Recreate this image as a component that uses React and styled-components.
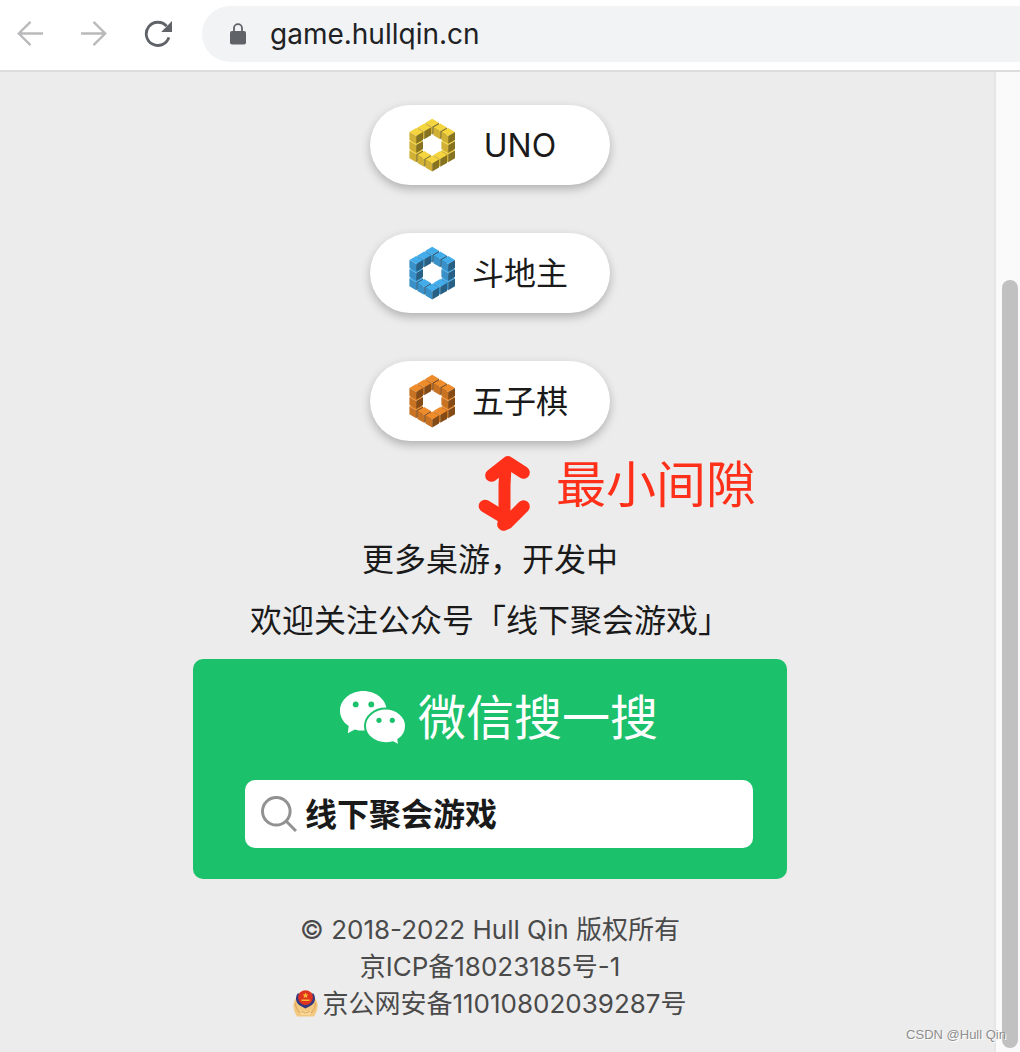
import React from "react";
import styled, { createGlobalStyle } from "styled-components";

const GlobalStyle = createGlobalStyle`
  * {
    box-sizing: border-box;
  }

  body {
    margin: 0;
    background: #ececec;
    color: #1a1a1a;
    font-family: Inter, "Noto Sans CJK SC", sans-serif;
  }

  button,
  input {
    font: inherit;
    color: inherit;
    border: 0;
    padding: 0;
    background: none;
  }

  a {
    color: inherit;
    text-decoration: none;
  }

  svg {
    display: block;
    flex-shrink: 0;
  }
`;

const Window = styled.div`
  position: relative;
  display: flex;
  flex-direction: column;
  min-height: 100vh;
  overflow: hidden;
`;

const Toolbar = styled.header`
  display: flex;
  align-items: center;
  padding: 6px 0 8px 16px;
  background: #fff;
  border-bottom: 2px solid #dcdcdc;
`;

const NavButtons = styled.nav`
  display: flex;
  gap: 36px;
  margin-right: 30px;
`;

const NavButton = styled.button`
  width: 28px;
  height: 28px;
  color: ${({ disabled }) => (disabled ? "#bababc" : "#5f6368")};
`;

const AddressBar = styled.label`
  flex: 1;
  display: flex;
  align-items: center;
  gap: 24px;
  height: 56px;
  padding-left: 28px;
  background: #f1f3f4;
  border-radius: 28px 0 0 28px;
`;

const AddressInput = styled.input`
  flex: 1;
  min-width: 0;
  font-size: 28px;
  color: #202124;
  outline: none;
`;

const Viewport = styled.div`
  flex: 1;
  display: flex;
`;

const Page = styled.main`
  flex: 1;
  display: flex;
  flex-direction: column;
  align-items: center;
  padding: 33px 14px 24px 0;
`;

const GameList = styled.ul`
  display: flex;
  flex-direction: column;
  gap: 48px;
  margin: 0;
  padding: 0;
  list-style: none;
`;

const GameLink = styled.a`
  display: flex;
  align-items: center;
  gap: 16px;
  width: 240px;
  height: 80px;
  padding: 0 42px 0 38px;
  border-radius: 40px;
  background: #fff;
  box-shadow: 0 4px 10px rgba(0, 0, 0, 0.25);
  font-size: 32px;
  line-height: 45px;
`;

const GameName = styled.span`
  flex: 1;
  text-align: center;
`;

const Gap = styled.div`
  position: relative;
  width: 100%;
  height: 96px;
`;

// Hand-drawn note lying over the free space
const Note = styled.div`
  position: absolute;
  top: 12px;
  left: calc(50% - 14px);
  display: flex;
  gap: 24px;
  color: #ff3019;
  font-size: 50px;
  line-height: 64px;
  white-space: nowrap;
`;

const Intro = styled.div`
  display: flex;
  flex-direction: column;
  gap: 16px;
  margin-bottom: 16px;
  font-size: 32px;
  line-height: 45px;
  text-align: center;

  p {
    margin: 0;
  }
`;

const WechatCard = styled.section`
  width: 594px;
  max-width: 100%;
  padding: 24px 34px 31px 52px;
  border-radius: 10px;
  background: #1cc16b;
`;

const WechatTitle = styled.h2`
  display: flex;
  align-items: center;
  justify-content: center;
  gap: 12px;
  margin: 0 0 27px;
  color: #fff;
  font-size: 48px;
  font-weight: 400;
  line-height: 70px;
`;

const SearchBox = styled.label`
  display: flex;
  align-items: center;
  gap: 8px;
  height: 68px;
  padding: 0 16px;
  border-radius: 10px;
  background: #fff;
`;

const SearchInput = styled.input`
  flex: 1;
  min-width: 0;
  height: 45px;
  font-size: 32px;
  font-weight: 700;
  line-height: 45px;
  outline: none;
`;

const Footer = styled.footer`
  display: flex;
  flex-direction: column;
  align-items: center;
  margin-top: 32px;
  color: #4a4a4a;
  font-size: 26px;
  line-height: 37px;
`;

const PoliceLink = styled.a`
  display: flex;
  align-items: center;
  gap: 4px;
`;

const Scrollbar = styled.div`
  display: flex;
  flex-direction: column;
  width: 26px;
  padding: 0 2px 4px 6px;
  border-left: 2px solid #e6e6e6;
  background: #fafafa;

  &::before {
    content: "";
    flex: 208;
  }
`;

const Thumb = styled.div`
  flex: 768;
  border-radius: 8px;
  background: #c1c1c1;
`;

const Watermark = styled.span`
  position: absolute;
  right: 14px;
  bottom: 8px;
  color: #8e8e8e;
  font-family: "Liberation Sans", sans-serif;
  font-size: 13px;
  line-height: 18px;
  text-shadow: 1px 1px 0 #fff;
`;

const BackIcon = () => (
  <svg width="28" height="28" fill="none" stroke="currentColor" strokeWidth="2.4">
    <path d="M27 13.5H2.5M14.5 1.8 2.8 13.5 14.5 25.2" />
  </svg>
);

const ForwardIcon = () => (
  <svg width="28" height="28" fill="none" stroke="currentColor" strokeWidth="2.4">
    <path d="M1 13.5H25.5M13.5 1.8 25.2 13.5 13.5 25.2" />
  </svg>
);

const ReloadIcon = () => (
  <svg width="28" height="28" fill="none">
    <path
      d="M22.6 6.2A11.6 11.6 0 1 0 24.9 17.4"
      stroke="currentColor"
      strokeWidth="2.8"
    />
    <path d="M28 1V12H17.2Z" fill="currentColor" />
  </svg>
);

const LockIcon = () => (
  <svg width="16" height="22" fill="none">
    <path d="M4 9V5.2a4 4 0 0 1 8 0V9" stroke="#5f6368" strokeWidth="1.8" />
    <rect y="8" width="16" height="13.5" rx="2" fill="#5f6368" />
  </svg>
);

// Ring of cubes along six edges of a 3x3x3 block, sorted back to front
const RING = [
  [0, 0, 2],
  [0, 1, 2],
  [0, 2, 2],
  [0, 2, 1],
  [0, 2, 0],
  [1, 2, 0],
  [2, 2, 0],
  [2, 1, 0],
  [2, 0, 0],
  [2, 0, 1],
  [2, 0, 2],
  [1, 0, 2],
].sort((a, b) => a[0] + a[1] + a[2] - (b[0] + b[1] + b[2]));

const CubeRing = ({ colors }) => {
  const [top, left, right] = colors;
  return (
    <svg width="48" height="54" aria-hidden="true">
      {RING.map(([x, y, z]) => (
        <g
          key={`${x}${y}${z}`}
          transform={`translate(${24.2 + (x - y) * 8} ${
            8.7 + (x + y) * 4.6 + (2 - z) * 9.2
          })`}
        >
          <path d="M0 -7.9 6.8 -3.9 0 0 -6.8 -3.9Z" fill={top} />
          <path d="M-6.8 -3.9 0 0V7.900L-6.8 4Z" fill={left} />
          <path d="M6.8 -3.9 0 0V7.900L6.8 4Z" fill={right} />
        </g>
      ))}
    </svg>
  );
};

const DoubleArrow = () => (
  <svg
    width="56"
    height="80"
    viewBox="476 452 56 80"
    fill="none"
    stroke="currentColor"
    strokeWidth="12.6"
    strokeLinecap="round"
    strokeLinejoin="round"
    aria-hidden="true"
  >
    <path d="M491.5 474.5 508 461.5 523.5 471.5" />
    <path d="M505.5 466 504.5 484V520" strokeWidth="12" />
    <path d="M485 505 505 517 503.5 523.5 507 522 523.5 505.5" />
  </svg>
);

const WechatIcon = () => (
  <svg width="66" height="54" fill="#fff" aria-hidden="true">
    <path d="M23.3 0C10.4 0 0 8.8 0 19.8c0 6.2 3.3 11.6 8.7 15.3L7.8 42.3 14.8 38.4c2.7.8 5.5 1.2 8.5 1.2C36.2 39.6 46.7 30.8 46.7 19.8S36.2 0 23.3 0Z" />
    <path
      d="M45.8 17.6C34.3 17.6 25 25.4 25 34.9s9.3 17.3 20.8 17.3c2.6 0 5-.4 7.2-1l6.3 3.5-1-5.9c4.7-3.2 7.7-8.2 7.7-13.9 0-9.5-9.2-17.3-20.2-17.3Z"
      stroke="#1cc16b"
      strokeWidth="2"
    />
    <g fill="#1cc16b">
      <circle cx="15.7" cy="13.4" r="2.9" />
      <circle cx="31.3" cy="13.4" r="2.9" />
      <circle cx="39" cy="29.3" r="2.6" />
      <circle cx="52.3" cy="29.3" r="2.6" />
    </g>
  </svg>
);

const SearchIcon = () => (
  <svg width="36" height="36" fill="none" stroke="#919193" strokeWidth="3">
    <circle cx="15.3" cy="15.3" r="13.8" />
    <path d="M25 25 35 35" />
  </svg>
);

const PoliceBadge = () => (
  <svg width="25" height="27" viewBox="0 0 25 27" aria-hidden="true">
    <path
      d="M2.5 9C0 12 0 17 1 19.5 1 22 3 24 4 26.5H21C22 24 24 22 24 19.5 25 17 25 12 22.5 9Z"
      fill="#f3c982"
    />
    <path
      d="M2.5 13C2.5 17 4 20 7 23M22.5 13C22.5 17 21 20 18 23"
      fill="none"
      stroke="#d89f50"
    />
    <path
      d="M4.5 3.5C3 6 2.5 9 3.5 11.5c1.3 3.5 5 5 9 7 4-2 7.7-3.5 9-7 1-2.5.5-5.5-1-8Z"
      fill="#34387f"
    />
    <circle cx="12.5" cy="7.6" r="7.4" fill="#e03420" />
    <path
      d="M12.5 2.5l.9 1.9 2 .2-1.5 1.4.5 2-1.9-1-1.9 1 .5-2-1.5-1.4 2-.2ZM8.5 9.5h8V11h-8Z"
      fill="#f8b832"
    />
    <path d="M7 20q5.5 3 11 0l-1 4.5H8Z" fill="#f8dfa3" />
    <path d="M8 21.5q4.5 3 9 0" fill="none" stroke="#dda557" />
  </svg>
);

const games = [
  { name: "UNO", colors: ["#f5d53e", "#d0b035", "#877220"] },
  { name: "斗地主", colors: ["#43adec", "#3991c8", "#276084"] },
  { name: "五子棋", colors: ["#ee8b2b", "#c87324", "#854b16"] },
];

const App = () => (
  <Window>
    <GlobalStyle />
    <Toolbar>
      <NavButtons>
        <NavButton type="button" aria-label="后退" disabled>
          <BackIcon />
        </NavButton>
        <NavButton type="button" aria-label="前进" disabled>
          <ForwardIcon />
        </NavButton>
        <NavButton type="button" aria-label="刷新">
          <ReloadIcon />
        </NavButton>
      </NavButtons>
      <AddressBar>
        <LockIcon />
        <AddressInput
          type="text"
          aria-label="网址"
          defaultValue="game.hullqin.cn"
        />
      </AddressBar>
    </Toolbar>
    <Viewport>
      <Page>
        <GameList>
          {games.map(({ name, colors }) => (
            <li key={name}>
              <GameLink href="#">
                <CubeRing colors={colors} />
                <GameName>{name}</GameName>
              </GameLink>
            </li>
          ))}
        </GameList>
        <Gap>
          <Note>
            <DoubleArrow />
            <span>最小间隙</span>
          </Note>
        </Gap>
        <Intro>
          <p>更多桌游，开发中</p>
          <p>欢迎关注公众号「线下聚会游戏」</p>
        </Intro>
        <WechatCard>
          <WechatTitle>
            <WechatIcon />
            微信搜一搜
          </WechatTitle>
          <SearchBox>
            <SearchIcon />
            <SearchInput
              type="text"
              aria-label="搜一搜"
              defaultValue="线下聚会游戏"
            />
          </SearchBox>
        </WechatCard>
        <Footer>
          <span>© 2018-2022 Hull Qin 版权所有</span>
          <a href="#">京ICP备18023185号-1</a>
          <PoliceLink href="#">
            <PoliceBadge />
            京公网安备11010802039287号
          </PoliceLink>
        </Footer>
      </Page>
      <Scrollbar aria-hidden="true">
        <Thumb />
      </Scrollbar>
    </Viewport>
    <Watermark>CSDN @Hull Qin</Watermark>
  </Window>
);

export default App;
